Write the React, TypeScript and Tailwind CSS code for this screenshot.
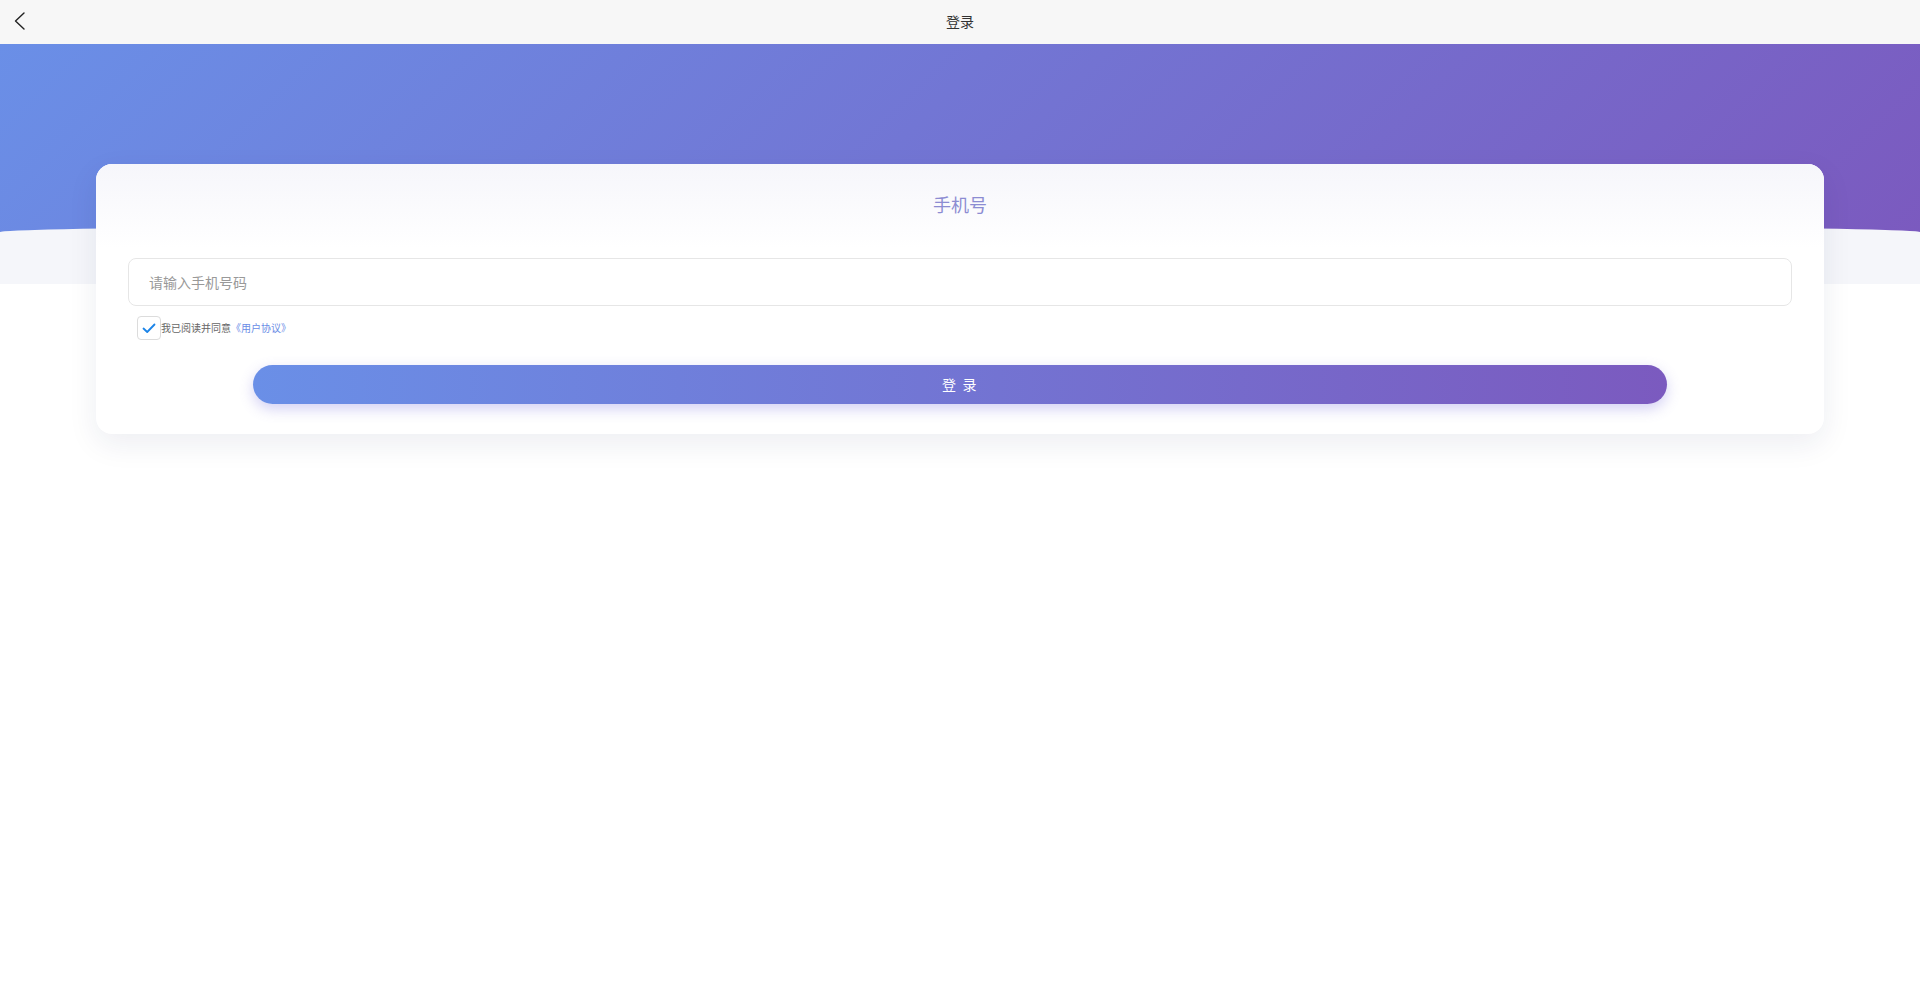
import React, { useState } from 'react';

const font = 'font-["Noto_Sans","Noto_Sans_CJK_SC",sans-serif]';

export default function App() {
  const [agreed, setAgreed] = useState(true);
  const [phone, setPhone] = useState('');

  return (
    <div className={`min-h-screen bg-white ${font}`}>
      {/* Nav bar */}
      <div className="relative flex h-[44px] items-center justify-center bg-[#f7f7f7]">
        <button className="absolute left-[14px] top-[12px] flex h-[18px] w-[12px] items-center">
          <svg width="11" height="18" viewBox="0 0 11 18" fill="none">
            <polyline points="10,1 1.5,9 10,17" stroke="#222" strokeWidth="1.4" strokeLinecap="round" strokeLinejoin="round" />
          </svg>
        </button>
        <span className="-mt-[2px] text-[14px] text-[#333]">登录</span>
      </div>

      {/* Banner */}
      <div className="h-[188px] bg-[linear-gradient(135deg,#6a8fe7_0%,#7b5abf_100%)]" />
      <div className="-mt-[8px] h-[60px] rounded-tl-[50%_8px] rounded-tr-[50%_8px] bg-[#f5f6fa]" />

      {/* Card */}
      <div className="relative -mt-[120px] mx-[96px] overflow-hidden rounded-[16px] bg-white shadow-[0_10px_30px_rgba(30,40,90,0.08)]">
        <div className="flex h-[84px] items-center justify-center bg-gradient-to-b from-[#f6f6fb] to-white">
          <h2 className="-mt-[2px] text-[18px] text-[#8c8cd2]">手机号</h2>
        </div>

        <div className="px-[32px] pb-[30px] pt-[10px]">
          <input
            value={phone}
            onChange={(e) => setPhone(e.target.value)}
            placeholder="请输入手机号码"
            className="h-[48px] w-full rounded-[8px] border border-[#e6e6e6] px-[20px] text-[14px] text-[#333] outline-none placeholder:text-[#999]"
          />

          <div className="mt-[10px] flex items-center pl-[9px]">
            <button
              onClick={() => setAgreed(!agreed)}
              className="flex h-[24px] w-[24px] items-center justify-center rounded-[4px] border border-[#dcdcdc] bg-white"
            >
              {agreed && (
                <svg width="14" height="11" viewBox="0 0 14 11" fill="none">
                  <polyline points="1.5,5.5 5.2,9 12.5,1.5" stroke="#1b84e8" strokeWidth="1.8" strokeLinecap="round" strokeLinejoin="round" />
                </svg>
              )}
            </button>
            <span className="text-[10px] text-[#666]">我已阅读并同意</span>
            <span className="text-[10px] text-[#6a8ce6]">《用户协议》</span>
          </div>

          <button className="mx-auto mt-[25px] flex h-[39px] w-[85%] items-center justify-center rounded-full bg-[linear-gradient(90deg,#6a8fe7_0%,#7b5abf_100%)] text-[14px] tracking-[0.1em] text-white shadow-[0_5px_14px_rgba(110,100,220,0.3)]">
            登 录
          </button>
        </div>
      </div>
    </div>
  );
}
